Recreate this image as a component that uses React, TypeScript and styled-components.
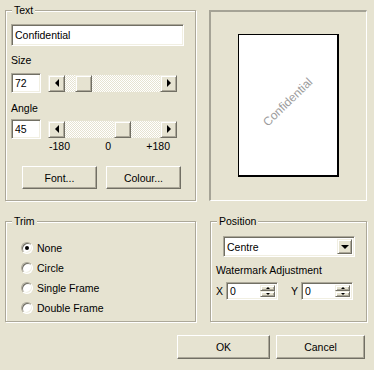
import React from "react";
import styled, { createGlobalStyle, css } from "styled-components";

const BG = "#E6E3D1";
const SHADOW = "#ACA899";
const DARK = "#716F64";
const LIGHT = "#F1EFE2";

const Global = createGlobalStyle`
  html, body { margin: 0; padding: 0; background: ${BG}; }
  body { font-family: "Liberation Sans", Arial, sans-serif; font-size: 10.5px; color: #000; }
  * { box-sizing: border-box; }
`;

const raised = css`
  background: ${BG};
  border: 1px solid;
  border-color: ${LIGHT} ${DARK} ${DARK} ${LIGHT};
  box-shadow: inset 1px 1px 0 #fff, inset -1px -1px 0 ${SHADOW};
`;

const sunken = css`
  background: #fff;
  border: 1px solid;
  border-color: ${SHADOW} #fff #fff ${SHADOW};
  box-shadow: inset 1px 1px 0 ${DARK}, inset -1px -1px 0 ${LIGHT};
`;

const Dialog = styled.div`
  width: 374px;
  height: 370px;
  padding: 10px 0 0 5px;
  display: flex;
  flex-direction: column;
  overflow: hidden;
`;

const Row = styled.div<{ $gap: number; $top?: number; $end?: boolean }>`
  display: flex;
  align-items: flex-start;
  gap: ${(p) => p.$gap}px;
  margin-top: ${(p) => p.$top ?? 0}px;
  justify-content: ${(p) => (p.$end ? "flex-end" : "flex-start")};
  padding-right: ${(p) => (p.$end ? 9 : 0)}px;
`;

const Group = styled.div<{ $w: number; $h: number; $pad: string }>`
  position: relative;
  flex: none;
  width: ${(p) => p.$w}px;
  height: ${(p) => p.$h}px;
  padding: ${(p) => p.$pad};
  border: 1px solid ${SHADOW};
  box-shadow: inset 1px 1px 0 #fff, 1px 1px 0 #fff;
`;

const Caption = styled.span`
  position: absolute;
  top: -7px;
  left: 6px;
  padding: 0 2px;
  line-height: 13px;
  background: ${BG};
`;

const TextBox = styled.div<{ $w: number; $h: number }>`
  ${sunken};
  flex: none;
  width: ${(p) => p.$w}px;
  height: ${(p) => p.$h}px;
  display: flex;
  align-items: center;
  padding-left: 3px;
  line-height: 13px;
`;

const FieldLabel = styled.div<{ $top: number }>`
  margin-top: ${(p) => p.$top}px;
  line-height: 13px;
`;

const SliderRow = styled.div<{ $top: number }>`
  margin-top: ${(p) => p.$top}px;
  display: flex;
  align-items: center;
  gap: 7px;
  height: 20px;
`;

const Bar = styled.div`
  display: flex;
  width: 129px;
  height: 17px;
`;

const BarButton = styled.div`
  ${raised};
  flex: none;
  width: 17px;
  height: 17px;
  display: flex;
  align-items: center;
  justify-content: center;
`;

const Track = styled.div`
  flex: 1;
  display: flex;
  background: repeating-conic-gradient(#fff 0% 25%, ${BG} 0% 50%) 0 0 / 2px 2px;
`;

const Thumb = styled.div`
  ${raised};
  flex: none;
  width: 17px;
  height: 17px;
`;

const Tri = styled.span<{ $dir: "left" | "right" | "up" | "down"; $s: number }>`
  width: 0;
  height: 0;
  border-style: solid;
  ${(p) => {
    const s = p.$s;
    switch (p.$dir) {
      case "left":
        return `border-width:${s}px ${s}px ${s}px 0;border-color:transparent #000 transparent transparent;`;
      case "right":
        return `border-width:${s}px 0 ${s}px ${s}px;border-color:transparent transparent transparent #000;`;
      case "up":
        return `border-width:0 ${s}px ${s}px ${s}px;border-color:transparent transparent #000 transparent;`;
      default:
        return `border-width:${s}px ${s}px 0 ${s}px;border-color:#000 transparent transparent transparent;`;
    }
  }}
`;

const Ticks = styled.div`
  margin: 1px 0 0 38px;
  width: 121px;
  display: flex;
  justify-content: space-between;
  line-height: 13px;
`;

const Buttons = styled.div<{ $top: number; $left: number; $gap: number }>`
  display: flex;
  gap: ${(p) => p.$gap}px;
  margin: ${(p) => p.$top}px 0 0 ${(p) => p.$left}px;
`;

const PushButton = styled.div<{ $w: number; $h: number }>`
  ${raised};
  border-color: #fff ${DARK} ${DARK} #fff;
  box-shadow: inset -1px -1px 0 ${SHADOW};
  width: ${(p) => p.$w}px;
  height: ${(p) => p.$h}px;
  display: flex;
  align-items: center;
  justify-content: center;
`;

const Preview = styled.div`
  flex: none;
  width: 158px;
  height: 191px;
  border-style: solid;
  border-width: 2px 1px 1px 2px;
  border-color: #A5A396 #fff #fff #A5A396;
  display: flex;
  align-items: center;
  justify-content: center;
  padding-bottom: 1px;
`;

const Page = styled.div`
  width: 101px;
  height: 143px;
  background: #fff;
  border-style: solid;
  border-color: #000;
  border-width: 1px 2px 2px 1px;
  display: flex;
  align-items: center;
  justify-content: center;
`;

const Watermark = styled.span`
  font-size: 12px;
  color: #9c9c9c;
  transform: rotate(-44deg);
  margin-bottom: 6px;
  white-space: nowrap;
`;

const RadioList = styled.div`
  display: flex;
  flex-direction: column;
`;

const RadioRow = styled.div`
  height: 20px;
  display: flex;
  align-items: center;
  gap: 4px;
`;

const RadioDot = styled.span<{ $on: boolean }>`
  ${sunken};
  width: 12px;
  height: 12px;
  border-radius: 50%;
  display: flex;
  align-items: center;
  justify-content: center;
  &::after {
    content: "";
    width: 4px;
    height: 4px;
    border-radius: 50%;
    background: ${(p) => (p.$on ? "#000" : "transparent")};
  }
`;

const Select = styled.div`
  ${sunken};
  margin-left: 7px;
  width: 132px;
  height: 21px;
  display: flex;
  align-items: stretch;
  padding: 2px;
`;

const SelectText = styled.span`
  flex: 1;
  display: flex;
  align-items: center;
  padding-left: 1px;
`;

const DropButton = styled.div`
  ${raised};
  width: 15px;
  display: flex;
  align-items: center;
  justify-content: center;
`;

const SpinRow = styled.div`
  margin-top: 5px;
  display: flex;
  align-items: center;
  height: 18px;
`;

const AxisLabel = styled.span<{ $left: number }>`
  margin-left: ${(p) => p.$left}px;
  margin-right: 3px;
  line-height: 13px;
`;

const SpinBox = styled.div`
  ${sunken};
  width: 52px;
  height: 18px;
  display: flex;
  padding: 2px;
`;

const SpinText = styled.span`
  flex: 1;
  display: flex;
  align-items: center;
  padding-left: 1px;
`;

const SpinButtons = styled.div`
  width: 15px;
  display: flex;
  flex-direction: column;
`;

const SpinButton = styled.div`
  ${raised};
  flex: 1;
  display: flex;
  align-items: center;
  justify-content: center;
`;

function ScrollBar({ value, min, max }: { value: number; min: number; max: number }) {
  const travel = 129 - 34 - 17;
  const offset = Math.round(((value - min) / (max - min)) * travel);
  return (
    <Bar>
      <BarButton>
        <Tri $dir="left" $s={4} />
      </BarButton>
      <Track>
        <Thumb style={{ marginLeft: offset }} />
      </Track>
      <BarButton>
        <Tri $dir="right" $s={4} />
      </BarButton>
    </Bar>
  );
}

function Spin({ value }: { value: string }) {
  return (
    <SpinBox>
      <SpinText>{value}</SpinText>
      <SpinButtons>
        <SpinButton>
          <Tri $dir="up" $s={2} />
        </SpinButton>
        <SpinButton>
          <Tri $dir="down" $s={2} />
        </SpinButton>
      </SpinButtons>
    </SpinBox>
  );
}

const trims = ["None", "Circle", "Single Frame", "Double Frame"];

export default function App() {
  return (
    <>
      <Global />
      <Dialog>
        <Row $gap={13}>
          <Group $w={191} $h={191} $pad="13px 0 0 5px">
            <Caption>Text</Caption>
            <TextBox $w={173} $h={22}>Confidential</TextBox>
            <FieldLabel $top={8}>Size</FieldLabel>
            <SliderRow $top={6}>
              <TextBox $w={30} $h={20}>72</TextBox>
              <ScrollBar value={72} min={8} max={500} />
            </SliderRow>
            <FieldLabel $top={9}>Angle</FieldLabel>
            <SliderRow $top={4}>
              <TextBox $w={30} $h={20}>45</TextBox>
              <ScrollBar value={45} min={-180} max={180} />
            </SliderRow>
            <Ticks>
              <span>-180</span>
              <span>0</span>
              <span>+180</span>
            </Ticks>
            <Buttons $top={13} $left={11} $gap={9}>
              <PushButton $w={75} $h={23}>Font...</PushButton>
              <PushButton $w={75} $h={23}>Colour...</PushButton>
            </Buttons>
          </Group>
          <Preview>
            <Page>
              <Watermark>Confidential</Watermark>
            </Page>
          </Preview>
        </Row>
        <Row $gap={14} $top={20}>
          <Group $w={191} $h={101} $pad="16px 0 0 15px">
            <Caption>Trim</Caption>
            <RadioList>
              {trims.map((t, i) => (
                <RadioRow key={t}>
                  <RadioDot $on={i === 0} />
                  <span>{t}</span>
                </RadioRow>
              ))}
            </RadioList>
          </Group>
          <Group $w={157} $h={101} $pad="14px 0 0 5px">
            <Caption>Position</Caption>
            <Select>
              <SelectText>Centre</SelectText>
              <DropButton>
                <Tri $dir="down" $s={4} />
              </DropButton>
            </Select>
            <FieldLabel $top={7}>Watermark Adjustment</FieldLabel>
            <SpinRow>
              <AxisLabel $left={0}>X</AxisLabel>
              <Spin value="0" />
              <AxisLabel $left={13}>Y</AxisLabel>
              <Spin value="0" />
            </SpinRow>
          </Group>
        </Row>
        <Row $gap={6} $top={13} $end>
          <PushButton $w={93} $h={24}>OK</PushButton>
          <PushButton $w={89} $h={24}>Cancel</PushButton>
        </Row>
      </Dialog>
    </>
  );
}
